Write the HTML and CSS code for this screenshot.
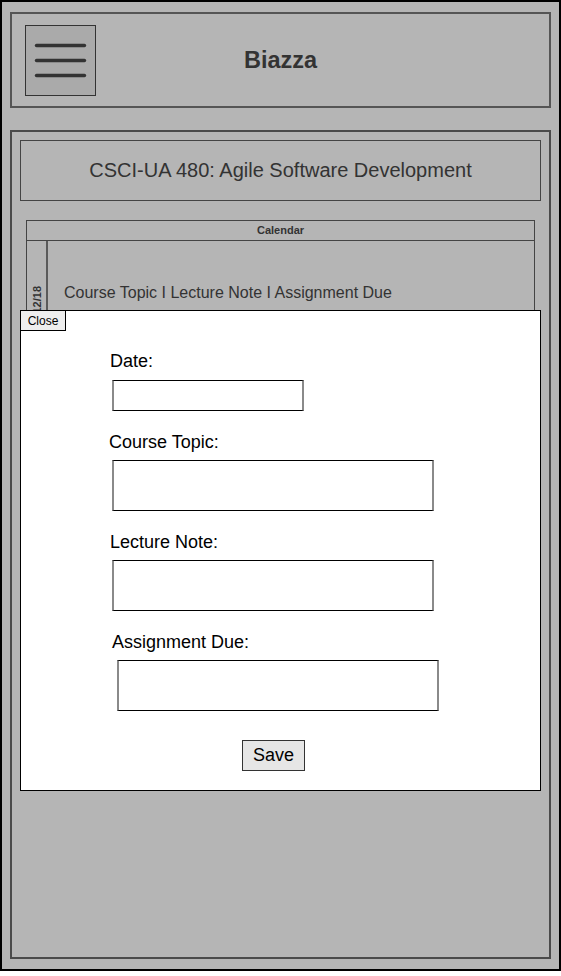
FILE: index.html
```html
<!DOCTYPE html>
<html lang="en">
<head>
<meta charset="utf-8">
<title>Biazza</title>
<link rel="stylesheet" href="styles.css">
</head>
<body>
<div class="frame">
  <header class="topbar">
    <button class="menu-btn" type="button" aria-label="Menu">
      <svg width="69" height="69" viewBox="0 0 69 69">
        <g stroke="#333" stroke-width="3.4" stroke-linecap="round">
          <line x1="10.5" y1="19.5" x2="58.5" y2="19.5"/>
          <line x1="10.5" y1="34.5" x2="58.5" y2="34.5"/>
          <line x1="10.5" y1="49.5" x2="58.5" y2="49.5"/>
        </g>
      </svg>
    </button>
    <h1 class="brand">Biazza</h1>
    <span></span>
  </header>
  <main class="main">
    <div class="course-title">CSCI-UA 480: Agile Software Development</div>
    <section class="calendar">
      <div class="cal-head">Calendar</div>
      <div class="cal-row">
        <div class="cal-date"><span class="cal-date-text">12/18</span></div>
        <div class="cal-content">Course Topic I Lecture Note I Assignment Due</div>
      </div>
    </section>
    <div class="modal">
      <button class="close-btn" type="button">Close</button>
      <form class="form">
        <label class="lbl lbl-date">Date:</label>
        <input class="field field-date" type="text">
        <label class="lbl lbl-topic">Course Topic:</label>
        <input class="field field-wide field-topic" type="text">
        <label class="lbl lbl-note">Lecture Note:</label>
        <input class="field field-wide field-note" type="text">
        <label class="lbl lbl-due">Assignment Due:</label>
        <input class="field field-wide field-due" type="text">
        <button class="save-btn" type="button">Save</button>
      </form>
    </div>
  </main>
</div>
</body>
</html>
```
FILE: styles.css
```css
html, body {
  margin: 0;
  padding: 0;
  background: #ffffff;
}
body {
  font-family: "Liberation Sans", Arial, Helvetica, sans-serif;
}
.frame {
  width: 561px;
  height: 971px;
  box-sizing: border-box;
  border: 2px solid #000;
  background: #b5b5b5;
  padding: 10px 8px;
  display: flex;
  flex-direction: column;
  gap: 22px;
}
.topbar {
  height: 96px;
  box-sizing: border-box;
  border: 2px solid #555;
  display: grid;
  grid-template-columns: 1fr auto 1fr;
  align-items: center;
  padding: 0 13px;
}
.menu-btn {
  width: 71px;
  height: 71px;
  box-sizing: border-box;
  border: 1px solid #333;
  background: #aaaaaa;
  padding: 0;
  margin: 0;
  display: block;
}
.menu-btn svg {
  display: block;
}
.brand {
  margin: 0;
  font-size: 23.5px;
  font-weight: bold;
  color: #333;
}
.main {
  flex: 1;
  position: relative;
  box-sizing: border-box;
  border: 2px solid #4a4a4a;
  padding: 8px;
}
.course-title {
  height: 61px;
  box-sizing: border-box;
  border: 1px solid #444;
  display: flex;
  align-items: center;
  justify-content: center;
  font-size: 20px;
  color: #333;
}
.calendar {
  margin: 19px 6px 0 6px;
  border: 1px solid #444;
}
.cal-head {
  height: 19px;
  line-height: 19px;
  border-bottom: 1px solid #444;
  text-align: center;
  font-size: 11px;
  font-weight: bold;
  color: #333;
}
.cal-row {
  display: flex;
  height: 104px;
}
.cal-date {
  width: 21px;
  box-sizing: border-box;
  border-right: 2px solid #5a5a5a;
  display: flex;
  flex-direction: column;
  align-items: center;
  padding-top: 45px;
}
.cal-date-text {
  writing-mode: vertical-rl;
  transform: rotate(180deg);
  font-size: 11px;
  font-weight: bold;
  color: #333;
}
.cal-content {
  align-self: center;
  padding-left: 16px;
  font-size: 16px;
  color: #333;
}
.modal {
  position: absolute;
  left: 8px;
  top: 178px;
  width: 521px;
  height: 481px;
  box-sizing: border-box;
  border: 1px solid #000;
  background: #fff;
}
.close-btn {
  display: block;
  margin: -1px 0 0 -1px;
  width: 46px;
  height: 21px;
  box-sizing: border-box;
  border: 1px solid #000;
  background: #eeeeee;
  padding: 0;
  font-family: "Liberation Sans", Arial, sans-serif;
  font-size: 12px;
  color: #000;
}
.form {
  margin: 0;
  padding: 20px 0 0 89px;
  display: flex;
  flex-direction: column;
  align-items: flex-start;
}
.lbl {
  display: block;
  font-size: 18px;
  line-height: 20px;
  color: #000;
}
.lbl-topic { margin-top: 21px; margin-left: -1px; }
.lbl-note { margin-top: 21px; }
.lbl-due { margin-top: 21px; margin-left: 2px; }
.field {
  display: block;
  box-sizing: border-box;
  margin: 0 0 0 2px;
  padding: 0;
  border: 1px solid #000;
  border-left: 2px solid #8a8a8a;
  border-right: 2px solid #8a8a8a;
  background: #fff;
}
.field-date {
  width: 192px;
  height: 31px;
  margin-top: 9px;
}
.field-wide {
  width: 322px;
  height: 51px;
}
.field-topic { margin-top: 8px; }
.field-note { margin-top: 8px; }
.field-due { margin-top: 8px; margin-left: 7px; }
.save-btn {
  margin: 29px 0 0 132px;
  width: 63px;
  height: 31px;
  box-sizing: border-box;
  border: 1px solid #333;
  background: #e6e6e6;
  padding: 0;
  font-family: "Liberation Sans", Arial, sans-serif;
  font-size: 18px;
  color: #000;
}
```
